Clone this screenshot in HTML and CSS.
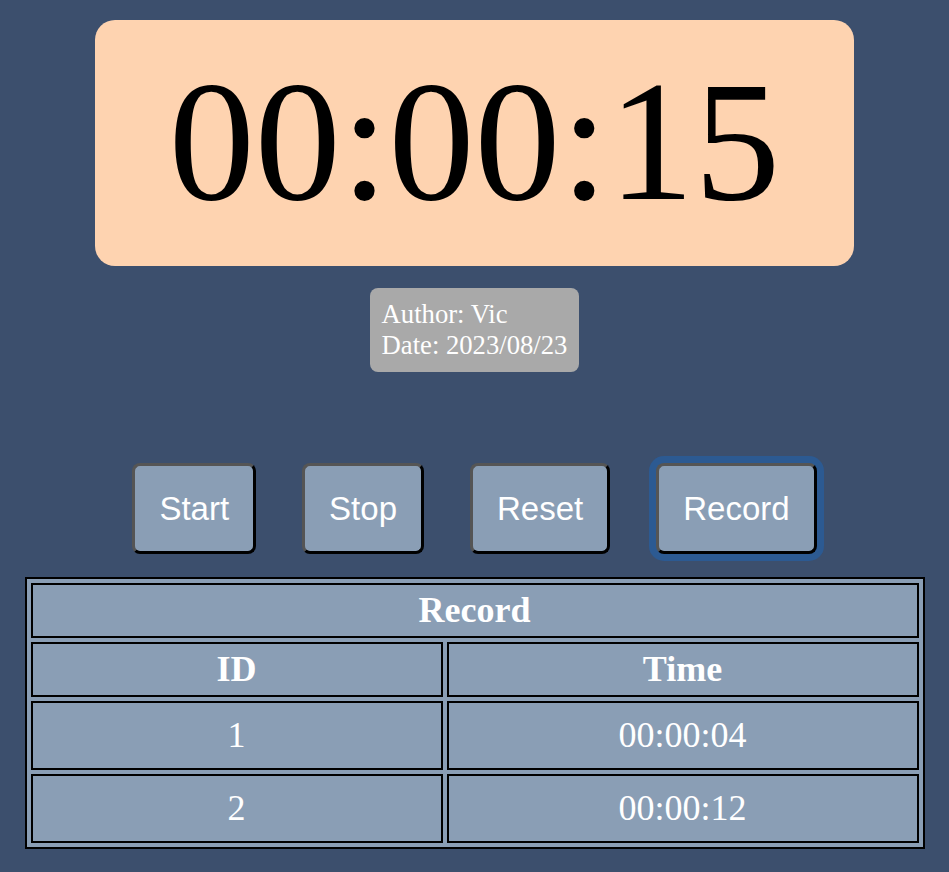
FILE: index.html
```html
<!DOCTYPE html>
<html lang="en">
<head>
<meta charset="utf-8">
<title>Stopwatch</title>
<link rel="stylesheet" href="styles.css">
</head>
<body>
  <div class="timer">00:00:15</div>
  <div class="info">
    <div>Author: Vic</div>
    <div>Date: 2023/08/23</div>
  </div>
  <div class="controls">
    <button class="btn">Start</button>
    <button class="btn">Stop</button>
    <button class="btn">Reset</button>
    <button class="btn btn-focus">Record</button>
  </div>
  <table class="records">
    <colgroup>
      <col class="col-id">
      <col class="col-time">
    </colgroup>
    <thead>
      <tr><th colspan="2">Record</th></tr>
      <tr><th>ID</th><th>Time</th></tr>
    </thead>
    <tbody>
      <tr><td>1</td><td>00:00:04</td></tr>
      <tr><td>2</td><td>00:00:12</td></tr>
    </tbody>
  </table>
</body>
</html>
```
FILE: styles.css
```css
html, body {
  margin: 0;
  padding: 0;
}

body {
  background: #3c4f6d;
  padding-top: 20px;
  font-family: "Liberation Serif", "Times New Roman", serif;
  display: flex;
  flex-direction: column;
  align-items: center;
  min-height: 852px;
}

.timer {
  width: 80%;
  box-sizing: border-box;
  background: #fed3b0;
  border-radius: 20px;
  padding: 20px 0 24px;
  font-size: 172px;
  line-height: 202px;
  text-align: center;
  color: #000;
}

.info {
  margin-top: 22px;
  padding: 11px 12px;
  background: #a9a9a9;
  border-radius: 8px;
  color: #fff;
  font-size: 26.67px;
  line-height: 31px;
}

.controls {
  margin-top: 91px;
  display: flex;
  gap: 46px;
  justify-content: center;
}

.btn {
  font-family: "Liberation Sans", Arial, sans-serif;
  font-size: 33px;
  line-height: 39px;
  color: #fff;
  background: #8a9eb5;
  padding: 23px 24px;
  border: 3px solid;
  border-color: #555 #000 #000 #555;
  border-radius: 8px;
  margin: 0;
}

.btn-focus {
  box-shadow: 0 0 0 7px #2c5a92;
}

.records {
  margin-top: 23px;
  width: 900px;
  table-layout: fixed;
  border: 2px solid #000;
  border-spacing: 4px;
  background: #8a9eb5;
  color: #fff;
  font-size: 36px;
}

.col-id {
  width: 412px;
}

.records th,
.records td {
  border: 2px solid #000;
  text-align: center;
  line-height: 41px;
}

.records th {
  padding: 5px;
  font-weight: bold;
}

.records td {
  padding: 12px 5px;
  font-weight: normal;
}
```
